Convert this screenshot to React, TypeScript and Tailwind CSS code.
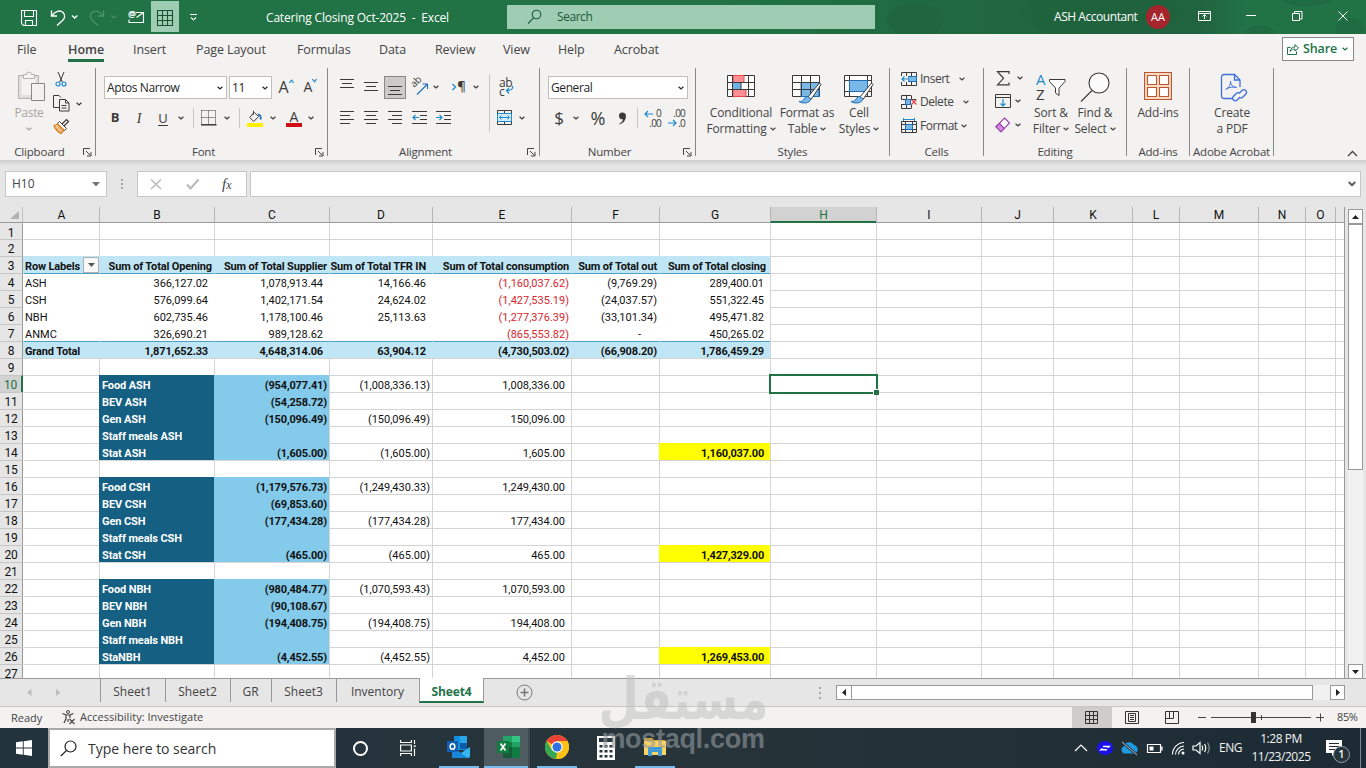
import type { FC, ReactNode } from "react";
import clsx from "clsx";

/* ---------- shared bits ---------- */

const Chevron: FC<{ className?: string }> = ({ className }) => (
	<svg width="6" height="4" viewBox="0 0 6 4" className={clsx("shrink-0", className)} fill="none" stroke="currentColor" strokeWidth="1.2">
		<path d="M0.6 0.7 3 3 5.4 0.7" />
	</svg>
);

const Slot: FC<{ className?: string; children?: ReactNode }> = ({ className, children }) => (
	<div className={clsx("flex shrink-0 items-center justify-center", className)}>{children}</div>
);

const Lines: FC<{ rows: [number, number][]; top?: number; step?: number }> = ({ rows, top = 1.5, step = 4 }) => (
	<svg width="15" height="16" fill="none" stroke="#3b3a39" strokeWidth="1">
		{rows.map(([a, b], i) => (
			<path key={i} d={`M${a} ${top + i * step}H${b}`} />
		))}
	</svg>
);

const Launcher: FC = () => (
	<svg width="9" height="9" fill="none" stroke="#444" strokeWidth="1" className="absolute right-[3px] top-1">
		<path d="M0.5 7V0.5H7M3 3l4.5 4.5M8 4v4H4" />
	</svg>
);

type GroupProps = { label: string; className: string; launcher?: boolean; children: ReactNode };

const Group: FC<GroupProps> = ({ label, className, launcher, children }) => (
	<div className={clsx("flex h-[88px] shrink-0 flex-col border-r border-[#8a8886]", className)}>
		<div className="h-[76px] shrink-0">{children}</div>
		<div className={clsx("relative flex h-4 shrink-0 items-center justify-center whitespace-nowrap text-[11.5px] tracking-[-0.2px] text-[#444]", launcher && "pr-4")}>
			{label}
			{launcher && <Launcher />}
		</div>
	</div>
);

const Combo: FC<{ text: string; className: string }> = ({ text, className }) => (
	<div className={clsx("flex h-[23px] shrink-0 items-center justify-between border border-[#c0beb9] bg-white pl-[2px] pr-[3px] pt-px text-[12px] text-[#262626]", className)}>
		<span className="tracking-[-0.4px]">{text}</span>
		<Chevron />
	</div>
);

/* ---------- title bar ---------- */

const TitleBar: FC = () => (
	<div className="relative flex h-[34px] items-center bg-[#217346] text-white">
		<svg className="absolute right-0 top-0" width="666" height="34">
			<defs>
				<linearGradient id="tb" x1="0" x2="1">
					<stop offset="0" stopColor="#217346" />
					<stop offset="0.4" stopColor="#20683f" />
					<stop offset="0.75" stopColor="#20633f" />
					<stop offset="0.82" stopColor="#217346" />
				</linearGradient>
			</defs>
			<rect width="666" height="34" fill="url(#tb)" />
			<g fill="#1f5f3b" opacity="0.35">
				<ellipse cx="215" cy="20" rx="28" ry="17" />
				<ellipse cx="400" cy="14" rx="80" ry="26" />
				<ellipse cx="560" cy="34" rx="16" ry="8" />
				<ellipse cx="606" cy="0" rx="24" ry="6" />
				<ellipse cx="650" cy="30" rx="14" ry="12" />
			</g>
		</svg>
		<div className="relative flex w-[206px] items-center">
			<svg width="206" height="34" fill="none" stroke="#fff" strokeWidth="1.1">
				<path d="M21.5 10.5h15v15h-13l-2-2zM24.5 10.5v6h9v-6M25.5 25.5v-5h7v5" />
				<path d="M51.5 10.5v5.5h5.5M51.8 15.8C55 11 60 9.8 63 12.5c3 3 1.5 6-0.5 8l-5.5 5" strokeWidth="1.4" />
				<path d="M72 15.5l2.7 2.5 2.7-2.5" strokeWidth="1.4" />
				<g stroke="#4d9069">
					<path d="M103.5 10.5v5.5H98M103.2 15.8C100 11 95 9.8 92 12.5c-3 3-1.5 6 0.5 8l5.5 5" strokeWidth="1.3" />
					<path d="M111 15.5l2.7 2.5 2.7-2.5" />
				</g>
				<path d="M136 12.5h7.5v10H129v-3M136.5 17.5l7-5M129 19.5v3" />
				<rect x="151" y="1" width="28" height="31" fill="#9fcdb3" stroke="none" />
				<path d="M157.5 10.5h15v15h-15zM157.5 15.5h15M157.5 20.5h15M162.5 10.5v15M167.5 10.5v15" stroke="#1d4f33" />
				<path d="M190 14.5h7M191 17.5l2.5 2.3 2.5-2.3" />
			</svg>
			<span className="absolute left-[128px] top-[8px] text-[9px] font-bold leading-[11px]">@</span>
		</div>
		<div className="relative ml-[60px] w-[241px] whitespace-pre pt-px text-[12px] tracking-[-0.18px]">Catering Closing Oct-2025  -  Excel</div>
		<div className="relative flex h-6 w-[368px] items-center bg-[#9fcdb3] pl-[20px] text-[12px] text-[#1e5a39]">
			<svg width="16" height="16" fill="none" stroke="#1e5a39" strokeWidth="1.1">
				<circle cx="9.5" cy="5.5" r="4.3" />
				<path d="M6.5 8.8 1 14.5" />
			</svg>
			<span className="ml-[14px] tracking-[-0.45px]">Search</span>
		</div>
		<span className="relative ml-[179px] w-[92px] whitespace-nowrap text-[12px] tracking-[-0.45px]">ASH Accountant</span>
		<Slot className="relative h-6 w-6 rounded-full bg-[#a4262c] text-[11px]">AA</Slot>
		<svg className="relative ml-[27px]" width="160" height="34" fill="none" stroke="#fff" strokeWidth="1">
			<path d="M1.5 11.5h12v9h-12zM1.5 13.5h12M7.5 19v-4M5.5 16.5l2-2 2 2" />
			<path d="M49 15.5h10" />
			<path d="M95.5 13.5h7v7h-7zM97.5 13v-1.5h7.5v7.5h-2" />
			<path d="M141.5 11.5l9 9M150.5 11.5l-9 9" />
		</svg>
	</div>
);

/* ---------- ribbon tabs ---------- */

const TABS: [string, string][] = [
	["File", "w-[51px]"],
	["Home", "w-[65px]"],
	["Insert", "w-[63px]"],
	["Page Layout", "w-[101px]"],
	["Formulas", "w-[82px]"],
	["Data", "w-[56px]"],
	["Review", "w-[68px]"],
	["View", "w-[55px]"],
	["Help", "w-[56px]"],
	["Acrobat", "w-[60px]"],
];

const RibbonTabs: FC = () => (
	<div className="flex h-[34px] items-start pl-[17px] text-[12.5px] text-[#444]">
		{TABS.map(([label, w]) => (
			<div key={label} className={clsx("flex h-[28px] shrink-0", w)}>
				<span className={clsx("whitespace-nowrap pt-[6px] leading-[19px]", label === "Home" ? "border-b-[3px] border-[#217346] font-semibold" : "tracking-[-0.1px]")}>{label}</span>
			</div>
		))}
		<div className="ml-auto mr-3 mt-[3px] flex h-6 w-[72px] items-center border border-[#8a8886] bg-white pl-1 font-semibold text-[#217346]">
			<svg width="12" height="12" fill="none" stroke="#217346" strokeWidth="1">
				<path d="M3.5 4.5h-3v7h9v-3M3 8.5c0.5-3 2.5-4.5 5-4.5V1.5l3.5 3.5L8 8V6C6 6 4.5 6.8 3 8.5z" />
			</svg>
			<span className="ml-1 tracking-[-0.1px]">Share</span>
			<Chevron className="ml-[5px]" />
		</div>
	</div>
);

/* ---------- ribbon groups ---------- */

const ClipboardGroup: FC = () => (
	<Group label="Clipboard" className="w-[96px]" launcher>
		<div className="flex text-[#3b3a39]">
			<div className="ml-[13px] flex w-8 flex-col items-center text-[12px] text-[#a6a4a2]">
				<svg width="28" height="32" className="ml-[5px] mt-[3px]" fill="none" stroke="#b5b3b1">
					<path d="M0.5 4.5h20v23h-20z" fill="#e1dfdd" />
					<path d="M3.5 7h14v17h-14z" fill="#f3f2f1" stroke="none" />
					<path d="M5.5 7.5v-4h3a2.5 2.5 0 0 1 5 0h3v4z" fill="#f3f2f1" />
					<path d="M13.5 12.5h13v17h-13z" fill="#f3f2f1" stroke="#8a8886" />
				</svg>
				<span className="leading-[20px] tracking-[-0.3px]">Paste</span>
				<Chevron className="mt-[4px]" />
			</div>
			<div className="ml-[8px] flex flex-col">
				<svg width="16" height="17" className="mt-[3px]" fill="none" stroke="#3b3a39">
					<path d="M5 1l4.5 10.5M11 1 6.5 11.5" />
					<circle cx="5" cy="13" r="2" stroke="#1e8bcd" strokeWidth="1.2" />
					<circle cx="11" cy="13" r="2" stroke="#1e8bcd" strokeWidth="1.2" />
				</svg>
				<div className="mt-[7px] flex items-center">
					<svg width="18" height="17" fill="none" stroke="#3b3a39">
						<path d="M6 12.5H0.5v-12h5.5l2 2" />
						<path d="M6.5 4.5h6l3.5 3.5v8h-9.5zM12.5 4.5v3.5h3.5M8.5 10.5h5M8.5 13h5" />
					</svg>
					<Chevron className="ml-[5px]" />
				</div>
				<svg width="17" height="17" className="mt-[6px]" fill="none" stroke="#3b3a39">
					<path d="M9 6l4.5-4.5 2 2L11 8" strokeWidth="1.2" />
					<path d="M6.5 3.5l7 7-2 2-7-7z" fill="#fff" />
					<path d="M4.5 6L1 8c1.5 3 4 6.5 7 7.5l3-3.5z" fill="#f8d9b0" stroke="#d87b1c" strokeWidth="1.3" />
					<path d="M3 9.5l5 5M5 8.5l4.5 4.5" stroke="#d87b1c" />
				</svg>
			</div>
		</div>
	</Group>
);

const FontGroup: FC = () => (
	<Group label="Font" className="w-[232px]" launcher>
		<div className="flex h-[38px] items-center pl-2 text-[#3b3a39]">
			<Combo text="Aptos Narrow" className="w-[123px]" />
			<Combo text="11" className="ml-[2px] w-[43px]" />
			<Slot className="ml-[6px] w-[16px] items-start">
				<span className="text-[16px] leading-[19px]">A</span>
				<svg width="5" height="5" className="mt-px" fill="none" stroke="#1e8bcd" strokeWidth="1.2"><path d="M0.4 4 2.5 1.2 4.6 4" /></svg>
			</Slot>
			<Slot className="ml-[9px] w-[15px] items-start">
				<span className="text-[14px] leading-[20px]">A</span>
				<svg width="5" height="5" className="mt-px" fill="none" stroke="#1e8bcd" strokeWidth="1.2"><path d="M0.4 1 2.5 3.8 4.6 1" /></svg>
			</Slot>
		</div>
		<div className="flex h-6 items-center pl-2 text-[13px] text-[#3b3a39]">
			<Slot className="w-[22px] font-bold">B</Slot>
			<Slot className="ml-[2px] w-[22px] font-['Liberation_Serif'] text-[14px] italic">I</Slot>
			<Slot className="ml-[2px] w-[22px]"><span className="border-b border-[#3b3a39] leading-[14px]">U</span></Slot>
			<Slot className="w-[14px]"><Chevron /></Slot>
			<Slot className="w-[10px]"><i className="h-5 w-px bg-[#c8c6c4]" /></Slot>
			<Slot className="w-[22px]">
				<svg width="16" height="16" fill="none" stroke="#3b3a39">
					<path d="M0.5 0.5h14v14M0.5 0.5v14M7.5 0.5v14M0.5 7.5h14" strokeDasharray="1 1" />
					<path d="M0 14.8h15.5" strokeWidth="1.5" />
				</svg>
			</Slot>
			<Slot className="w-[14px]"><Chevron /></Slot>
			<Slot className="w-[10px]"><i className="h-5 w-px bg-[#c8c6c4]" /></Slot>
			<Slot className="w-[22px]">
				<svg width="16" height="17" fill="none" stroke="#3b3a39">
					<path d="M7 2.5 2.8 7.5l4 4 4.7-5-4-4M6.5 0.8v4" />
					<path d="M11 4.5c2 0 3.3 2 2.5 5" stroke="#1e6fb8" strokeWidth="1.8" />
					<path d="M0 13h16v4H0z" fill="#fff000" stroke="none" />
				</svg>
			</Slot>
			<Slot className="w-[14px]"><Chevron /></Slot>
			<Slot className="ml-[3px] w-[22px] flex-col">
				<span className="text-[14px] leading-[13px]">A</span>
				<i className="h-1 w-4 bg-[#d00f14]" />
			</Slot>
			<Slot className="w-[12px]"><Chevron /></Slot>
		</div>
	</Group>
);

const IndentIcon: FC<{ out?: boolean }> = ({ out }) => (
	<svg width="16" height="16" fill="none" stroke="#3b3a39">
		<path d="M0 1.5h15M8 5.5h7M8 9.5h7M0 13.5h15" />
		{out ? <path d="M7 7.5H1M3.5 5 1 7.5 3.5 10" stroke="#1e8bcd" strokeWidth="1.2" /> : <path d="M0 7.5h6M3.5 5 6 7.5 3.5 10" stroke="#1e8bcd" strokeWidth="1.2" />}
	</svg>
);

const AlignmentGroup: FC = () => (
	<Group label="Alignment" className="w-[212px]" launcher>
		<div className="flex">
			<div className="w-[161px] pl-2 text-[#3b3a39]">
				<div className="flex h-[38px] items-center">
					<Slot className="h-[22px] w-[22px] pb-1"><Lines rows={[[0, 14], [2, 12], [0, 14]]} top={2.5} /></Slot>
					<Slot className="ml-[2px] h-[22px] w-[22px]"><Lines rows={[[0, 14], [2, 12], [0, 14]]} top={3.5} /></Slot>
					<Slot className="ml-[2px] h-[23px] w-[22px] border border-[#8a8886] bg-[#cdcbc9] pt-[5px]"><Lines rows={[[0, 14], [2, 12], [0, 14]]} top={4.5} /></Slot>
					<Slot className="ml-[2px] w-[24px]">
						<div className="relative h-4 w-4">
							<span className="absolute -left-[2px] -top-[5px] -rotate-45 text-[10px]">ab</span>
							<svg width="17" height="17" className="absolute left-0 top-0" fill="none" stroke="#1e6fb8" strokeWidth="1.1"><path d="M5 15.5 15 5.5M10.5 5h5v5" /></svg>
						</div>
					</Slot>
					<Slot className="-ml-[2px] w-[12px]"><Chevron /></Slot>
					<Slot className="ml-[6px] w-[22px] text-[13px] font-semibold">
						<svg width="5" height="8" fill="none" stroke="#1e8bcd" strokeWidth="1.3"><path d="M0.5 1 3.5 4 0.5 7" /></svg>
						¶
					</Slot>
					<Slot className="w-[12px]"><Chevron /></Slot>
				</div>
				<div className="flex h-6 items-center">
					<Slot className="w-[22px]"><Lines rows={[[0, 14], [0, 10], [0, 14], [0, 10]]} /></Slot>
					<Slot className="ml-[2px] w-[22px]"><Lines rows={[[0, 14], [2, 12], [0, 14], [2, 12]]} /></Slot>
					<Slot className="ml-[2px] w-[22px]"><Lines rows={[[0, 14], [4, 14], [0, 14], [4, 14]]} /></Slot>
					<Slot className="ml-[2px] w-[24px]"><IndentIcon out /></Slot>
					<Slot className="w-[24px]"><IndentIcon /></Slot>
				</div>
			</div>
			<i className="mt-[6px] h-[58px] w-px bg-[#c8c6c4]" />
			<div className="pl-[6px] text-[#3b3a39]">
				<Slot className="h-[38px] w-5">
					<div className="relative h-[20px] w-4 text-[12px] leading-[9px]">
						<span className="absolute left-px top-[1px] tracking-[-0.5px]">ab</span>
						<span className="absolute left-px top-[10px]">c</span>
						<svg width="9" height="9" className="absolute left-[7px] top-[9px]" fill="none" stroke="#1e8bcd" strokeWidth="1.2"><path d="M7.5 0c0.5 3-1 4.5-6 4.5M4 2 1.5 4.5 4 7.5" /></svg>
					</div>
				</Slot>
				<div className="flex h-6 items-center">
					<svg width="16" height="16" fill="none" stroke="#3b3a39" className="ml-px">
						<path d="M0.5 0.5h14v14h-14zM7.5 0.5v3M7.5 11.5v3" />
						<path d="M0.5 3.5h14v8h-14z" fill="#d5ebf8" stroke="#1e8bcd" />
						<path d="M2.5 7.5h10M4.5 5.5l-2 2 2 2M10.5 5.5l2 2-2 2" stroke="#1e8bcd" />
					</svg>
					<Chevron className="ml-[6px]" />
				</div>
			</div>
		</div>
	</Group>
);

const DecimalIcon: FC<{ inc?: boolean }> = ({ inc }) => (
	<div className="relative h-[18px] w-[17px] text-[10px] leading-[8px]">
		<span className="absolute right-0 top-0 tracking-[-0.8px]">{inc ? "0" : ".00"}</span>
		<span className="absolute bottom-0 right-0 tracking-[-0.8px]">{inc ? ".00" : ".0"}</span>
		<svg width="10" height="8" className={inc ? "absolute left-0 top-px" : "absolute bottom-0 left-0"} fill="none" stroke="#1e8bcd" strokeWidth="1.2">
			{inc ? <path d="M9 4H1M4 1 1 4l3 3" /> : <path d="M0 4h8M5 1l3 3-3 3" />}
		</svg>
	</div>
);

const NumberGroup: FC = () => (
	<Group label="Number" className="w-[156px]" launcher>
		<div className="flex h-[38px] items-center pl-2"><Combo text="General" className="w-[140px]" /></div>
		<div className="flex h-6 items-center pl-2 text-[17px] text-[#3b3a39]">
			<Slot className="w-[22px]">$</Slot>
			<Slot className="w-[12px]"><Chevron /></Slot>
			<Slot className="w-8 text-[18px]">%</Slot>
			<Slot className="w-4">
				<svg width="9" height="13"><path d="M4 0.5a3.5 3.5 0 0 1 4 3.5c0 4-2.5 7-6.5 8.5l-0.3-0.7C3.5 10.5 4.8 9 4.8 7.3A3.4 3.4 0 0 1 4 0.5z" fill="#3b3a39" /></svg>
			</Slot>
			<Slot className="w-[14px]"><i className="h-5 w-px bg-[#c8c6c4]" /></Slot>
			<Slot className="w-[17px]"><DecimalIcon inc /></Slot>
			<Slot className="ml-[7px] w-[17px]"><DecimalIcon /></Slot>
		</div>
	</Group>
);

const Brush: FC = () => (
	<g>
		<path d="M28.5 8 17 22l3 2.5L30 9.5z" fill="#fff" stroke="#3b3a39" />
		<path d="M17 21.5c-3 0-3.5 2-4.5 3.5-0.8 1-2.5 1.5-4.5 1.5 4 2.5 10.5 2 12-2.5z" fill="#7ab8e8" stroke="#1e6fb8" />
	</g>
);

const TallButton: FC<{ icon: ReactNode; lines: string[]; chevron?: boolean; className: string }> = ({ icon, lines, chevron, className }) => (
	<div className={clsx("flex shrink-0 flex-col items-center text-[12px] tracking-[-0.15px] text-[#444]", className)}>
		<div className="flex h-[37px] items-end">{icon}</div>
		{lines.map((line, i) => (
			<div key={line} className="flex h-4 items-center whitespace-nowrap">
				{line}
				{chevron && i === lines.length - 1 && <Chevron className="ml-[3px]" />}
			</div>
		))}
	</div>
);

const StylesGroup: FC = () => (
	<Group label="Styles" className="w-[194px]">
		<div className="flex">
			<TallButton
				className="ml-[10px] w-[70px]"
				chevron
				lines={["Conditional", "Formatting"]}
				icon={
					<svg width="28" height="30" fill="none" stroke="#3b3a39">
						<path d="M0.5 0.5h27v21h-27z" fill="#fff" />
						<path d="M6 0.5h11v7H6zM6 14.5h13v7H6z" fill="#ff8f93" stroke="#e8484d" />
						<path d="M6 7.5h8v7H6z" fill="#6fb2e8" stroke="none" />
						<path d="M0.5 7.5h27M0.5 14.5h27M5.5 0.5v21M21.5 0.5v21M14 7.5v7" />
					</svg>
				}
			/>
			<TallButton
				className="ml-[2px] w-[58px]"
				chevron
				lines={["Format as", "Table"]}
				icon={
					<svg width="32" height="30" fill="none" stroke="#3b3a39">
						<path d="M1.5 0.5h27v21h-27z" fill="#fff" />
						<path d="M10 7.5h18v14H10z" fill="#7ab8e8" stroke="#1e6fb8" />
						<path d="M1.5 7.5h27M1.5 14.5h27M10.5 0.5v21M19.5 0.5v21" />
						<Brush />
					</svg>
				}
			/>
			<TallButton
				className="-ml-[1px] w-[48px]"
				chevron
				lines={["Cell", "Styles"]}
				icon={
					<svg width="32" height="30" fill="none" stroke="#3b3a39">
						<path d="M1.5 0.5h27v21h-27z" fill="#fff" />
						<path d="M1.5 5.5h27M1.5 16.5h27M6.5 0.5v21M24.5 0.5v21" />
						<path d="M6.5 5.5h18v11h-18z" fill="#7ab8e8" stroke="#1e6fb8" />
						<Brush />
					</svg>
				}
			/>
		</div>
	</Group>
);

const CellsGroup: FC = () => (
	<Group label="Cells" className="w-[94px]">
		<div className="flex flex-col pl-[11px] text-[12px] text-[#444]">
			<div className="flex h-[22px] items-center">
				<svg width="16" height="15" fill="none" stroke="#3b3a39">
					<path d="M0.5 0.5h15v13h-15zM5.5 0.5v13M10.5 0.5v13M0.5 4.5h15M0.5 9.5h15" />
					<path d="M7 4.5h8.5v5H7z" fill="#7ab8e8" stroke="#1e6fb8" />
					<path d="M0 4h7v6H0z" fill="#f3f2f1" stroke="none" />
					<path d="M7 7H1M3.5 4.5 1 7l2.5 2.5" stroke="#1e8bcd" strokeWidth="1.2" />
				</svg>
				<span className="ml-[3px] w-[39px] tracking-[-0.5px]">Insert</span>
				<Chevron />
			</div>
			<div className="flex h-[24px] items-center">
				<svg width="16" height="15" fill="none" stroke="#3b3a39">
					<path d="M10 0.5H0.5v4H15M0.5 13.5H10M0.5 9.5v4M5.5 0.5v4M10.5 0.5v4M5.5 9.5v4M10.5 9.5v4M0 9.5h10" />
					<path d="M4.5 4.5h5v5h-5z" fill="#7ab8e8" stroke="#1e6fb8" />
					<path d="M10.5 4.5l5 5M15.5 4.5l-5 5" stroke="#e8484d" strokeWidth="1.3" />
				</svg>
				<span className="ml-[3px] w-[43px] tracking-[-0.45px]">Delete</span>
				<Chevron />
			</div>
			<div className="flex h-[23px] items-center">
				<svg width="16" height="16" fill="none" stroke="#3b3a39">
					<path d="M0.5 3.5h15v11h-15zM4.5 3.5v11M11.5 3.5v11M0.5 6.5h15M0.5 11.5h15" />
					<path d="M4.5 6.5h7v5h-7z" fill="#7ab8e8" stroke="#1e6fb8" />
					<path d="M2.5 0v3M13.5 0v3M2.5 1.5h11" stroke="#1e8bcd" />
				</svg>
				<span className="ml-[3px] w-[41px] tracking-[-0.45px]">Format</span>
				<Chevron />
			</div>
		</div>
	</Group>
);

const EditingGroup: FC = () => (
	<Group label="Editing" className="w-[143px]">
		<div className="flex text-[#3b3a39]">
			<div className="w-[47px] pl-[11px]">
				<div className="flex h-5 items-center">
					<svg width="15" height="15" fill="none" stroke="#3b3a39" strokeWidth="1.2" className="ml-px mr-[6px]"><path d="M13 3V0.7H1.5L7.5 7.3 1.5 13.8H13V11.5" /></svg>
					<Chevron />
				</div>
				<div className="mt-[1px] flex h-6 items-center">
					<svg width="16" height="14" fill="none" stroke="#3b3a39" className="mr-[4px]">
						<path d="M0.5 0.5h15v13h-15zM0.5 3.5h15" />
						<path d="M8 5v7M5.5 9.5 8 12l2.5-2.5" stroke="#1e8bcd" strokeWidth="1.2" />
					</svg>
					<Chevron />
				</div>
				<div className="flex h-6 items-center">
					<svg width="16" height="16" fill="none" stroke="#9a3fa8" strokeWidth="1.1" className="mr-[4px]">
						<path d="M9.5 1 14.5 6 6 14.8 1 9.8z" fill="#fff" />
						<path d="M4.5 6.5 9.3 11.5 6 14.8 1 9.8z" fill="#d58be0" />
					</svg>
					<Chevron />
				</div>
			</div>
			<TallButton
				className="w-[40px]"
				chevron
				lines={["Sort &", "Filter"]}
				icon={
					<div className="relative mb-[3px] h-[30px] w-[30px] text-[15px] leading-[14px]">
						<span className="absolute left-0 top-0 text-[#1e8bcd]">A</span>
						<span className="absolute left-0 top-[15px] text-[#3b3a39]">Z</span>
						<svg width="17" height="18" className="absolute left-[13px] top-[7px]" fill="#fff" stroke="#3b3a39"><path d="M0.5 0.5h15.5v2L10 9v7.5l-3.5-2.5V9L0.5 2.5z" /></svg>
					</div>
				}
			/>
			<TallButton
				className="ml-[2px] w-[44px]"
				chevron
				lines={["Find &", "Select"]}
				icon={
					<svg width="30" height="32" fill="none" stroke="#3b3a39" strokeWidth="1.1" className="mb-px">
						<circle cx="19" cy="11" r="10" fill="#fbfbfb" />
						<path d="M12 18.5 1 29.5" />
					</svg>
				}
			/>
		</div>
	</Group>
);

const Ribbon: FC = () => (
	<div className="flex h-[92px]">
		<ClipboardGroup />
		<FontGroup />
		<AlignmentGroup />
		<NumberGroup />
		<StylesGroup />
		<CellsGroup />
		<EditingGroup />
		<Group label="Add-ins" className="w-[63px]">
			<TallButton
				className="w-[62px]"
				lines={["Add-ins"]}
				icon={
					<svg width="28" height="28" fill="none" stroke="#b8592d" strokeWidth="1.1" className="mb-[5px]">
						<path d="M0.5 0.5h27v27h-27z" fill="#fbd9c6" />
						<path d="M3.5 3.5h9v9h-9zM15.5 3.5h9v9h-9zM3.5 15.5h9v9h-9zM15.5 15.5h9v9h-9z" fill="#fff" />
					</svg>
				}
			/>
		</Group>
		<Group label="Adobe Acrobat" className="w-[84px]">
			<TallButton
				className="w-[84px]"
				lines={["Create", "a PDF"]}
				icon={
					<svg width="28" height="30" fill="none" stroke="#3d6fdc" strokeWidth="1.3" className="mb-[2px] ml-[4px]">
						<path d="M12 25.5H4c-1.5 0-2.5-1-2.5-2.5V4c0-1.5 1-2.5 2.5-2.5h10.5L20 7v7M14.5 1.5V7H20" />
						<path d="M5.5 16.5c3.5-1.5 5.5-6 5-8.5M10.5 8c0 4 3 6.5 6 6.5M6.5 16c3-2 7-2.5 10-1.5" strokeWidth="1" />
						<path d="M17.5 19.5l3-3a2.6 2.6 0 0 1 3.7 3.7l-3 3a2.6 2.6 0 0 1-3.7 0M18.7 23l-3 3a2.6 2.6 0 0 1-3.7-3.7l3-3a2.6 2.6 0 0 1 3.7 0" transform="translate(1.5 1)" />
					</svg>
				}
			/>
		</Group>
		<svg width="11" height="7" className="ml-auto mr-[8px] mt-[82px]" fill="none" stroke="#444" strokeWidth="1.3"><path d="M1 6l4.5-4.5L10 6" /></svg>
	</div>
);

/* ---------- formula bar ---------- */

const FormulaBar: FC = () => (
	<div className="flex h-[47px] bg-[#e6e6e6] bg-linear-to-b from-[#cfcfcf] to-[#e6e6e6] to-[6px] pl-[5px] pt-[11px] text-[12px] text-[#444]">
		<div className="flex h-[26px] w-[102px] items-center justify-between border border-[#c6c6c6] bg-white pl-[6px] pr-[6px]">
			H10
			<svg width="8" height="5"><path d="M0 0h8L4 4.5z" fill="#777" /></svg>
		</div>
		<div className="flex h-[26px] w-[30px] flex-col items-center justify-center gap-[2px]">
			<i className="h-[2px] w-[2px] bg-[#a6a6a6]" />
			<i className="h-[2px] w-[2px] bg-[#a6a6a6]" />
			<i className="h-[2px] w-[2px] bg-[#a6a6a6]" />
		</div>
		<div className="flex h-[26px] w-[110px] items-center border border-[#c6c6c6] bg-white">
			<svg width="80" height="24" fill="none" stroke="#b9b9b9" strokeWidth="1.5">
				<path d="M13 7.5l10 9.5M23 7.5 13 17" />
				<path d="M49 12.5l3.5 4L60.5 7.5" strokeWidth="2" />
			</svg>
			<span className="ml-1 font-['Liberation_Serif'] text-[15px] italic leading-[20px] text-[#444]">f<span className="text-[12px]">x</span></span>
		</div>
		<div className="ml-[3px] mr-[5px] flex h-[26px] flex-1 items-center justify-end border border-[#c6c6c6] bg-white pr-[4px]">
			<svg width="8" height="6" fill="none" stroke="#555" strokeWidth="1.8"><path d="M0.8 1 4 4.2 7.2 1" /></svg>
		</div>
	</div>
);

/* ---------- sheet ---------- */

const COLS: [string, string][] = [
	["A", "w-[76px]"],
	["B", "w-[115px]"],
	["C", "w-[115px]"],
	["D", "w-[103px]"],
	["E", "w-[139px]"],
	["F", "w-[88px]"],
	["G", "w-[111px]"],
	["H", "w-[106px]"],
	["I", "w-[105px]"],
	["J", "w-[72px]"],
	["K", "w-[79px]"],
	["L", "w-[47px]"],
	["M", "w-[79px]"],
	["N", "w-[47px]"],
	["O", "w-[30px]"],
	["", "w-[9px]"],
];

const DATA: Record<number, string[]> = {
	3: ["Row Labels", "Sum of Total Opening", "Sum of Total Supplier", "Sum of Total TFR IN", "Sum of Total consumption", "Sum of Total out", "Sum of Total closing"],
	4: ["ASH", "366,127.02", "1,078,913.44", "14,166.46", "(1,160,037.62)", "(9,769.29)", "289,400.01"],
	5: ["CSH", "576,099.64", "1,402,171.54", "24,624.02", "(1,427,535.19)", "(24,037.57)", "551,322.45"],
	6: ["NBH", "602,735.46", "1,178,100.46", "25,113.63", "(1,277,376.39)", "(33,101.34)", "495,471.82"],
	7: ["ANMC", "326,690.21", "989,128.62", "", "(865,553.82)", "-", "450,265.02"],
	8: ["Grand Total", "1,871,652.33", "4,648,314.06", "63,904.12", "(4,730,503.02)", "(66,908.20)", "1,786,459.29"],
	10: ["", "Food ASH", "(954,077.41)", "(1,008,336.13)", "1,008,336.00"],
	11: ["", "BEV ASH", "(54,258.72)"],
	12: ["", "Gen ASH", "(150,096.49)", "(150,096.49)", "150,096.00"],
	13: ["", "Staff meals ASH"],
	14: ["", "Stat ASH", "(1,605.00)", "(1,605.00)", "1,605.00", "", "1,160,037.00"],
	16: ["", "Food CSH", "(1,179,576.73)", "(1,249,430.33)", "1,249,430.00"],
	17: ["", "BEV CSH", "(69,853.60)"],
	18: ["", "Gen CSH", "(177,434.28)", "(177,434.28)", "177,434.00"],
	19: ["", "Staff meals CSH"],
	20: ["", "Stat CSH", "(465.00)", "(465.00)", "465.00", "", "1,427,329.00"],
	22: ["", "Food NBH", "(980,484.77)", "(1,070,593.43)", "1,070,593.00"],
	23: ["", "BEV NBH", "(90,108.67)"],
	24: ["", "Gen NBH", "(194,408.75)", "(194,408.75)", "194,408.00"],
	25: ["", "Staff meals NBH"],
	26: ["", "StaNBH", "(4,452.55)", "(4,452.55)", "4,452.00", "", "1,269,453.00"],
};

const ROWS = Array.from({ length: 27 }, (_, i) => i + 1);

const cellLook = (row: number, col: number) => {
	const pivot = row >= 3 && row <= 8 && col <= 6;
	const block = row >= 10 && row <= 26 && row !== 15 && row !== 21;
	if (pivot) {
		if (row === 3) return "border-[#c0e6f5] bg-[#c0e6f5] font-bold tracking-[-0.15px]";
		if (row === 8) return "border-l-[#c0e6f5] border-t-[#4aa3c4] bg-[#c0e6f5] font-bold tracking-[-0.15px]";
		if (row === 4) return clsx("border-l-white border-t-[#4aa3c4]", col === 4 && "text-[#d8262c]");
		return clsx("border-white", col === 4 && "text-[#d8262c]");
	}
	if (block && col === 1) return "border-[#156082] bg-[#156082] font-bold tracking-[-0.1px] text-white";
	if (block && col === 2) return "border-[#83caeb] bg-[#83caeb] font-bold tracking-[-0.15px]";
	if (col === 6 && DATA[row]?.[6]) return "border-[#ffff00] bg-[#ffff00] font-bold tracking-[-0.2px]";
	return clsx(row === 1 ? "border-t-white" : "border-t-[#d4d4d4]", col === 0 ? "border-l-white" : "border-l-[#d4d4d4]");
};

const cellPad = (row: number, col: number, value: string) => {
	if (col === 0) return "justify-start pl-px";
	if (col === 1 && row >= 10) return "justify-start pl-[2px]";
	if (row === 3) {
		if (col === 3) return "justify-end pr-[6px]";
		return col === 6 ? "justify-end pr-[4px]" : "justify-end pr-[2px]";
	}
	if (value === "-") return "justify-end pr-[18px]";
	return value.startsWith("(") ? "justify-end pr-[2px]" : "justify-end pr-[6px]";
};

const Cell: FC<{ row: number; col: number; width: string }> = ({ row, col, width }) => {
	const value = DATA[row]?.[col] ?? "";
	return (
		<div className={clsx("relative flex shrink-0 items-center whitespace-nowrap border-l border-t pt-[3px] leading-[13px]", width, cellLook(row, col), cellPad(row, col, value))}>
			{value}
			{row === 3 && col === 0 && (
				<span className="absolute right-0 top-0 flex h-4 w-4 items-center justify-center border border-[#b0b0b0] bg-[#f8f8f8]">
					<svg width="7" height="4"><path d="M0 0h7L3.5 4z" fill="#555" /></svg>
				</span>
			)}
			{row === 10 && col === 7 && (
				<>
					<span className="absolute -left-[2px] -top-[2px] z-10 h-[20px] w-[109px] border-2 border-[#217346]" />
					<span className="absolute -bottom-[3px] -right-[3px] z-10 h-[6px] w-[6px] border-l border-t border-white bg-[#217346]" />
				</>
			)}
		</div>
	);
};

const Sheet: FC = () => (
	<div className="flex h-[471px] bg-[#e6e6e6]">
		<div className="flex w-[1345px] flex-col overflow-hidden border-r border-[#999] font-[Roboto] text-[11px] text-[#111]">
			<div className="flex h-4 border-b border-[#999] text-[12px]">
				<div className="flex w-[23px] items-end justify-end border-r border-[#c0c0c0] pb-[3px] pr-[3px]">
					<svg width="9" height="8"><path d="M9 0v8H0z" fill="#b1b1b1" /></svg>
				</div>
				{COLS.map(([name, w]) => (
					<div key={name} className={clsx("flex shrink-0 items-center justify-center border-l pt-[2px] leading-[13px]", w, name === "A" ? "border-transparent" : "border-[#b5b5b5]", name === "H" && "-mb-px border-b-2 border-b-[#217346] bg-[#d2d2d2] text-[#217346]")}>
						{name}
					</div>
				))}
			</div>
			{ROWS.map((row) => (
				<div key={row} className={clsx("flex shrink-0", row === 1 ? "h-4" : "h-[17px]")}>
					<div className={clsx("flex w-[23px] items-center justify-center border-r border-t pt-[2px] text-[12px] leading-[14px] tracking-[-0.3px]", row === 1 ? "border-t-transparent" : "border-t-[#c6c6c6]", row === 10 ? "border-r-2 border-r-[#217346] bg-[#d2d2d2] text-[#217346]" : "border-r-[#999]")}>
						{row}
					</div>
					<div className="flex bg-white">
						{COLS.map(([name, w], col) => (
							<Cell key={name} row={row} col={col} width={w} />
						))}
					</div>
				</div>
			))}
		</div>
		<div className="ml-[3px] mt-[2px] flex h-[470px] w-[15px] flex-col">
			<div className="flex h-[15px] items-center justify-center border border-[#999] bg-white"><svg width="7" height="4"><path d="M0 4h7L3.5 0z" fill="#222" /></svg></div>
			<div className="h-[246px] border border-[#999] bg-white" />
			<div className="flex-1 bg-[#f1f1f1]" />
			<div className="flex h-[15px] items-center justify-center border border-[#999] bg-white"><svg width="7" height="4"><path d="M0 0h7L3.5 4z" fill="#222" /></svg></div>
		</div>
	</div>
);

/* ---------- sheet tabs + status bar ---------- */

const SHEETS: [string, string][] = [
	["Sheet1", "w-[65px]"],
	["Sheet2", "w-[65px]"],
	["GR", "w-[41px]"],
	["Sheet3", "w-[65px]"],
	["Inventory", "w-[83px]"],
];

const SheetTabs: FC = () => (
	<div className="flex h-[29px] border-b border-[#c6c6c6] bg-[#e6e6e6] text-[12px] text-[#444]">
		<div className="flex w-[100px] items-center border-t border-[#999] pl-[27px]">
			<svg width="34" height="8" fill="#bdbdbd"><path d="M4.5 0v7L0 3.5zM29 0v7l4.5-3.5z" /></svg>
		</div>
		{SHEETS.map(([name, w]) => (
			<div key={name} className={clsx("shrink-0 border-t border-[#999]", w)}>
				<div className="flex h-[23px] items-center justify-center border-l border-[#999] pr-px pt-[3px]">{name}</div>
			</div>
		))}
		<div className="flex h-[25px] w-[65px] items-center justify-center border-x border-b-[2px] border-x-[#999] border-b-[#217346] bg-white pt-1 font-bold tracking-[-0.1px] text-[#217346]">Sheet4</div>
		<div className="flex flex-1 items-center border-t border-[#999]">
			<svg width="17" height="17" className="ml-[32px]" fill="none" stroke="#777"><circle cx="8.5" cy="8.5" r="7.5" /><path d="M4.5 8.5h8M8.5 4.5v8" strokeWidth="1.6" /></svg>
			<div className="ml-[286px] flex w-[2px] flex-col gap-[3px]">
				<i className="h-[2px] bg-[#a6a6a6]" />
				<i className="h-[2px] bg-[#a6a6a6]" />
				<i className="h-[2px] bg-[#a6a6a6]" />
			</div>
			<div className="ml-[15px] flex h-[15px]">
				<Slot className="w-[16px] border border-[#999] bg-white"><svg width="4" height="7"><path d="M4 0v7L0 3.5z" fill="#222" /></svg></Slot>
				<div className="-ml-px w-[462px] border border-[#999] bg-white" />
				<div className="w-[17px] bg-[#f1f1f1]" />
				<Slot className="w-[15px] border border-[#999] bg-white"><svg width="4" height="7"><path d="M0 0v7l4-3.5z" fill="#222" /></svg></Slot>
			</div>
		</div>
	</div>
);

const StatusBar: FC = () => (
	<div className="flex h-[21px] items-center bg-[#f3f2f1] pl-[11px] text-[11px] text-[#444]">
		<span className="w-[50px] pt-px">Ready</span>
		<svg width="16" height="15" fill="none" stroke="#444" className="mr-[3px]">
			<circle cx="7" cy="2" r="1.5" />
			<path d="M1.5 3.5 5 5v3.5L3 13M12.5 3.5 9 5v3M5 5h4M7 9v3M8.5 9l5 5M13.5 9l-5 5" strokeWidth="1.2" />
		</svg>
		<span className="tracking-[0.02px]">Accessibility: Investigate</span>
		<Slot className="ml-auto h-[21px] w-10 bg-[#cfcdcb]">
			<svg width="14" height="13" fill="none" stroke="#333"><path d="M0.5 0.5h12v12h-12zM0.5 4.5h12M0.5 8.5h12M4.5 0.5v12M8.5 0.5v12" /></svg>
		</Slot>
		<Slot className="w-10">
			<svg width="15" height="13" fill="none" stroke="#333"><path d="M0.5 0.5h13v12h-13zM3.5 2.5h7v8h-7zM5 4.5h4M5 6.5h4M5 8.5h4" /></svg>
		</Slot>
		<Slot className="w-10">
			<svg width="15" height="13" fill="none" stroke="#333"><path d="M0.5 0.5h13v12h-13zM4.5 0.5v7M8.5 0.5v7M0.5 7.5h8" /></svg>
		</Slot>
		<svg width="133" height="13" className="ml-[5px] mr-[7px]" fill="none" stroke="#444">
			<path d="M1 6.5h8M14 6.5h100M64.5 4v5M119 6.5h8M123.5 2.5v8" />
			<path d="M54 1h5v11h-5z" fill="#333" stroke="none" />
		</svg>
		<span className="w-[29px] tracking-[-0.4px]">85%</span>
	</div>
);

/* ---------- taskbar ---------- */

const TaskApp: FC<{ className?: string; children: ReactNode }> = ({ className, children }) => (
	<div className={clsx("flex h-10 shrink-0 items-center justify-center", className)}>{children}</div>
);

const Taskbar: FC = () => (
	<div className="flex h-10 items-center bg-linear-to-r from-[#22333d] via-[#27343a] to-[#1c2b34] text-[#f3f3f3]">
		<Slot className="w-12">
			<svg width="16" height="16" fill="#fff"><path d="M0 2.3 6.8 1.3v6.3H0zM7.7 1.2 16 0v7.6H7.7zM0 8.4h6.8v6.3L0 13.7zM7.7 8.4H16V16l-8.3-1.2z" /></svg>
		</Slot>
		<div className="flex h-10 w-[288px] items-center border-2 border-[#a9a9a9] bg-white pl-[10px] text-[14px] text-[#333]">
			<svg width="17" height="17" fill="none" stroke="#222" strokeWidth="1.2"><circle cx="10.5" cy="6.5" r="5.5" /><path d="M6.5 10.5 0.8 16" /></svg>
			<span className="ml-[11px] tracking-[-0.03px]">Type here to search</span>
		</div>
		<Slot className="w-12"><i className="h-[15px] w-[15px] rounded-full border-2 border-white" /></Slot>
		<Slot className="w-12">
			<svg width="17" height="16" fill="none" stroke="#fff" strokeWidth="1.2"><path d="M0.6 0v2.5h10.8V0M0.6 5h10.8v6H0.6zM0.6 16v-2.5h10.8V16M14.5 0v4M14.5 8.5v7.5M13.5 6.2h2.5" /></svg>
		</Slot>
		<TaskApp className="ml-[7px] w-10 border-b-2 border-[#76b9ed]">
			<svg width="24" height="22">
				<path d="M7 0h13v14H7z" fill="#1490df" />
				<path d="M13 0h7v7h-7z" fill="#28a8ea" />
				<path d="M13 7h7v6h-7z" fill="#0a5ca8" />
				<path d="M5 11l9 6 9-6v9a2 2 0 0 1-2 2H7a2 2 0 0 1-2-2z" fill="#35b8f1" />
				<path d="M5 11v9a2 2 0 0 0 2 2h14z" fill="#1a86d9" />
				<path d="M0 5h11v11H0z" fill="#0f5fb5" />
				<ellipse cx="5.5" cy="10.5" rx="2.3" ry="2.8" fill="none" stroke="#fff" strokeWidth="1.6" />
			</svg>
		</TaskApp>
		<TaskApp className="ml-[5px] w-[44px] border-b-2 border-[#76b9ed] bg-[#4f5c62]">
			<svg width="24" height="22" className="ml-[5px]">
				<path d="M6 0h9v6H6z" fill="#21a366" />
				<path d="M15 0h8v6h-8z" fill="#33c481" />
				<path d="M6 6h9v5H6z" fill="#107c41" />
				<path d="M15 6h8v5h-8z" fill="#21a366" />
				<path d="M6 11h9v11H6z" fill="#185c37" />
				<path d="M15 11h8v11h-8z" fill="#107c41" />
				<path d="M0 5h12v12H0z" fill="#107c41" />
				<path d="M3.5 7.5l5 7M8.5 7.5l-5 7" stroke="#fff" strokeWidth="1.7" />
			</svg>
		</TaskApp>
		<i className="h-10 w-[2px] bg-[#3c4a50]" />
		<TaskApp className="ml-[7px] w-10 border-b-2 border-[#76b9ed]">
			<svg width="24" height="24" viewBox="0 0 24 24">
				<circle cx="12" cy="12" r="12" fill="#fbc116" />
				<path d="M12 12 1.6 6A12 12 0 0 1 22.4 6z" fill="#ea4335" />
				<path d="M1.6 6 6.8 15 12 17.5 11 24A12 12 0 0 1 1.6 6z" fill="#34a853" />
				<path d="M12 6h10.4a12 12 0 0 1-11.4 18l6-9z" fill="#fbc116" />
				<circle cx="12" cy="12" r="5.7" fill="#fff" />
				<circle cx="12" cy="12" r="4.5" fill="#2f73e0" />
			</svg>
		</TaskApp>
		<TaskApp className="ml-[9px] w-10">
			<svg width="18" height="24">
				<path d="M0 0h18v24H0z" fill="#fff" />
				<path d="M2 2h14v4H2z" fill="#27343a" />
				<g fill="#27343a">
					{[9, 14, 19].map((y) => [2.5, 7.5, 12.5].map((x) => <rect key={`${x}-${y}`} x={x} y={y} width="3" height="2.5" />))}
				</g>
			</svg>
		</TaskApp>
		<TaskApp className="ml-[9px] w-10 border-b-2 border-[#76b9ed]">
			<svg width="22" height="20">
				<path d="M0 1h8l2 2h11v4H0z" fill="#e0a62c" />
				<path d="M0 4h22v14H0z" fill="#fcd462" />
				<path d="M4 10h14v9h-4v-4H8v4H4z" fill="#3f9ad6" />
			</svg>
		</TaskApp>
		<svg width="144" height="24" className="ml-auto mr-[3px]" fill="none" stroke="#fff" strokeWidth="1.2">
			<path d="M3 15l6-6 6 6" />
			<ellipse cx="33" cy="12" rx="7.5" ry="6.5" fill="#1b12e8" stroke="#1b12e8" />
			<path d="M31 10.5h6l-1.5 1.3M35 13.8h-6l1.5-1.3" strokeWidth="1.5" />
			<path d="M52 17.5a4 4 0 0 1 0-7.5 5.5 5.5 0 0 1 10-1 4.5 4.5 0 0 1 1 8.5z" fill="#1d9ae0" stroke="none" />
			<path d="M50 6l15 13" stroke="#22333d" strokeWidth="2.5" />
			<path d="M50 6l15 13" stroke="#b9c3c8" strokeWidth="1" />
			<path d="M75.5 8.5h13v8h-13zM88.5 11h1.5v3h-1.5" />
			<path d="M77.5 10.5h4v4h-4z" fill="#fff" stroke="none" />
			<path d="M100.5 18.5A12 12 0 0 1 112 6.5M103.5 18.5a9 9 0 0 1 8.5-8.5M106.5 18.5a6 6 0 0 1 5.5-5.5" strokeWidth="1.1" />
			<circle cx="111" cy="17" r="1.5" fill="#fff" stroke="none" />
			<path d="M121 10h3l4-3.5v11L124 14h-3zM130 9.5q1.5 2.5 0 5M132.5 8q2.5 4 0 8" />
			<path d="M135.5 6.5q3.5 5.5 0 11" stroke="#8a9499" />
		</svg>
		<span className="w-[24px] text-[12px] tracking-[-0.5px]">ENG</span>
		<div className="ml-[7px] w-[62px] whitespace-nowrap text-center text-[12px] leading-[18px] tracking-[-0.45px]">
			<div>1:28 PM</div>
			<div>11/23/2025</div>
		</div>
		<div className="relative ml-[12px] h-10 w-[36px]">
			<svg width="18" height="16" className="absolute left-[2px] top-[12px]"><path d="M0 0h16v13H9l-3 3v-3H0z" fill="#fff" /><path d="M3 3.5h10M3 6.5h10M3 9.5h6" stroke="#1c2b34" /></svg>
			<Slot className="absolute left-[9px] top-[18px] h-[17px] w-[17px] rounded-full border border-[#9aa3a8] bg-[#26343c] text-[11px] font-semibold">1</Slot>
		</div>
		<i className="mr-[5px] h-10 w-px bg-[#7d878c]" />
	</div>
);

const Watermark: FC = () => (
	<div className="pointer-events-none absolute left-[601px] top-[668px] flex h-[90px] w-[164px] flex-col items-center text-[#949a9d]">
		<span lang="ar" dir="rtl" className="h-[60px] scale-x-[0.93] scale-y-[1.15] whitespace-nowrap font-['DejaVu_Sans'] text-[50px] font-bold leading-[62px] text-[#bdbdbd] opacity-50">مستقل</span>
		<span className="font-['Liberation_Sans'] text-[27px] font-bold leading-[22px] tracking-[-0.3px] opacity-60">mostaql.com</span>
	</div>
);

export default function App() {
	return (
		<div className="relative flex h-[768px] w-[1366px] flex-col overflow-hidden bg-[#f3f2f1] font-['Open_Sans',sans-serif]">
			<TitleBar />
			<RibbonTabs />
			<Ribbon />
			<FormulaBar />
			<Sheet />
			<SheetTabs />
			<StatusBar />
			<Taskbar />
			<Watermark />
		</div>
	);
}
